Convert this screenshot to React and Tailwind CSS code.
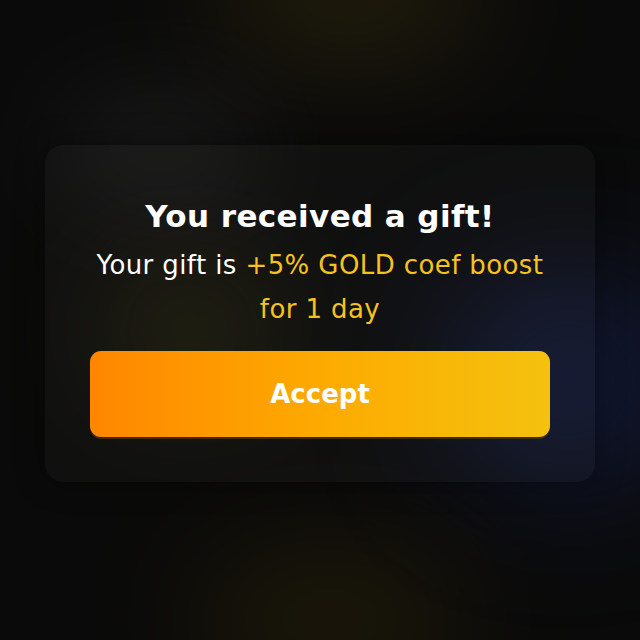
import React from 'react';

const GiftModal = () => {
    return (
        <div className="relative w-[640px] h-[640px] overflow-hidden bg-[#0a0a0a] font-['DejaVu_Sans',sans-serif]">
            {/* blurred glows behind the card */}
            <div className="absolute left-[220px] top-[-80px] w-[260px] h-[140px] rounded-full bg-[#5a4a10] opacity-30 blur-[60px]" />
            <div className="absolute left-[60px] top-[90px] w-[200px] h-[120px] rounded-full bg-[#3a3a3a] opacity-30 blur-[50px]" />
            <div className="absolute left-[110px] top-[270px] w-[160px] h-[120px] rounded-full bg-[#4a4410] opacity-40 blur-[60px]" />
            <div className="absolute left-[450px] top-[280px] w-[240px] h-[200px] rounded-full bg-[#1c2a6a] opacity-50 blur-[70px]" />
            <div className="absolute left-[200px] top-[550px] w-[260px] h-[140px] rounded-full bg-[#4a3a08] opacity-30 blur-[60px]" />

            <div className="relative flex justify-center pt-[145px]">
                <div className="w-[550px] h-[337px] rounded-[18px] bg-[#ffffff07] shadow-[0_0_30px_rgba(0,0,0,0.4)] px-[45px] pt-[53px] flex flex-col items-center">
                    <h1 className="text-[31px] leading-[36px] font-bold text-white tracking-[0.4px]">
                        You received a gift!
                    </h1>
                    <p className="mt-[9px] text-[26px] leading-[44px] text-center text-white tracking-[0.4px]">
                        Your gift is <span className="text-[#f6c21c]">+5% GOLD coef boost<br />for 1 day</span>
                    </p>
                    <button className="mt-[20px] w-full h-[86px] rounded-[11px] bg-gradient-to-r from-[#ff8600] via-[#fdaa00] to-[#f4c20e] shadow-[0_2px_0_rgba(90,60,0,0.6)] text-white text-[26px] font-bold">
                        Accept
                    </button>
                </div>
            </div>
        </div>
    );
};

export default GiftModal;
